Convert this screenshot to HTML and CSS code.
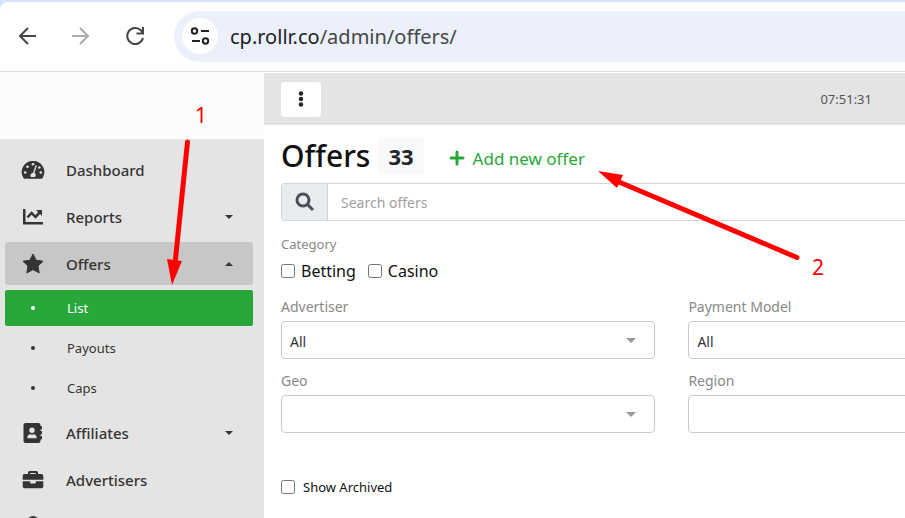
FILE: index.html
```
<!DOCTYPE html>
<html lang="en">
<head>
  <meta charset="UTF-8">
  <meta name="viewport" content="width=device-width, initial-scale=1.0">
  <title>Offers</title>
  <link rel="stylesheet" href="styles.css">
</head>
<body>
  <header class="browser">
    <button class="browser__btn" type="button" aria-label="Back">
      <svg width="20" height="20" viewBox="0 0 20 20"><path d="M19 10H3M11 2l-8 8 8 8" /></svg>
    </button>
    <button class="browser__btn disabled" type="button" aria-label="Forward">
      <svg width="20" height="20" viewBox="0 0 20 20"><path d="M1 10h16M9 2l8 8-8 8" /></svg>
    </button>
    <button class="browser__btn" type="button" aria-label="Reload">
      <svg width="20" height="20" viewBox="0 0 20 20"><path d="M18 12A8 8 0 1 1 16 4.500L18 7M18 1v6.500h-6.500" /></svg>
    </button>
    <div class="address">
      <button class="address__info" type="button" aria-label="Site information">
        <svg width="20" height="18" viewBox="0 0 20 18">
          <circle cx="4.500" cy="4" r="2.700" /><path d="M11 4h8" />
          <path d="M2 14h8" /><circle cx="15.500" cy="14" r="2.700" />
        </svg>
      </button>
      <span class="address__url">cp.rollr.co<span>/admin/offers/</span></span>
    </div>
  </header>

  <div class="app">
    <aside class="sidebar">
      <div class="sidebar__logo"></div>
      <nav class="nav">
        <a href="#" class="nav__item">
          <svg class="icon" width="24" height="20" viewBox="0 0 24 20">
            <path d="M12 1A11 11 0 0 0 2.600 18.200q.3.500 1 .5h16.800q.700 0 1-.5A11 11 0 0 0 12 1z" />
            <g class="cut"><circle cx="12" cy="4.200" r="1.300" /><circle cx="6.500" cy="6.800" r="1.300" /><circle cx="4.200" cy="12.500" r="1.300" /><circle cx="19.800" cy="12.500" r="1.300" /><circle cx="18.300" cy="7.500" r="1.300" /><path d="M14.600 5.200l1.300.400-2.400 7.500a2.800 2.800 0 0 1 .6 3.900H9.900a2.800 2.800 0 0 1 2.200-4.300z" /></g>
          </svg>
          Dashboard
        </a>
        <a href="#" class="nav__item">
          <svg class="icon" width="24" height="20" viewBox="0 0 24 20">
            <path d="M2 2h2.500v13H22v2.500H2z" /><path d="M15 3h6v6l-1.900-1.900-4.500 4.700-4-4-3.300 3.400-1.700-1.700 5-5.200 4 4L17 5z" />
          </svg>
          Reports
          <i class="caret"></i>
        </a>
        <a href="#" class="nav__item open">
          <svg class="icon" width="24" height="22" viewBox="0 0 24 22">
            <path d="M12 1l3.100 6.200 6.900 1-5 4.800 1.200 6.900-6.200-3.300-6.200 3.300L7 13 2 8.200l6.900-1z" stroke="#343434" stroke-linejoin="round" />
          </svg>
          Offers
          <i class="caret up"></i>
        </a>
        <div class="nav__sub">
          <a href="#" class="nav__link active">List</a>
          <a href="#" class="nav__link">Payouts</a>
          <a href="#" class="nav__link">Caps</a>
        </div>
        <a href="#" class="nav__item">
          <svg class="icon" width="24" height="22" viewBox="0 0 24 22">
            <path d="M4.500 1h13q2 0 2 2v1h.8q.7 0 .7.700v2q0 .7-.7.700h-.8v1.600h.8q.7 0 .7.700v2q0 .7-.7.700h-.8V14h.8q.7 0 .7.700v2q0 .7-.7.700h-.8V19q0 2-2 2h-13q-2 0-2-2V3q0-2 2-2z" />
            <g class="cut"><circle cx="11" cy="8.300" r="2.700" /><path d="M6.300 16.300c0-3 1.500-4 3-4 1 .5 2.400.5 3.400 0 1.500 0 3 1 3 4z" /></g>
          </svg>
          Affiliates
          <i class="caret"></i>
        </a>
        <a href="#" class="nav__item">
          <svg class="icon" width="24" height="20" viewBox="0 0 24 20">
            <path d="M7 4V2.500Q7 1 8.500 1h7Q17 1 17 2.500V4h3.500Q22.300 4 22.300 6v3.700H1.700V6Q1.700 4 3.500 4zM9.300 4h5.400V3H9.300zM1.700 11.200h7.500v1.600q0 .7.700.7h4.200q.7 0 .7-.7v-1.600h7.500V16.500q0 1.700-1.800 1.700h-17q-1.800 0-1.800-1.700z" fill-rule="evenodd" />
          </svg>
          Advertisers
        </a>
        <a href="#" class="nav__item" aria-label="Account">
          <svg class="icon" width="24" height="22" viewBox="0 0 24 22"><circle cx="12" cy="6" r="6" /><path d="M2 22q0-8 6-8h8q6 0 6 8z" /></svg>
        </a>
      </nav>
    </aside>

    <main class="main">
      <div class="topbar">
        <button class="topbar__menu" type="button" aria-label="Menu">
          <svg width="6" height="18" viewBox="0 0 6 18"><circle cx="3" cy="3.500" r="2.200" /><circle cx="3" cy="9" r="2.200" /><circle cx="3" cy="14.500" r="2.200" /></svg>
        </button>
        <time class="topbar__time">07:51:31</time>
      </div>

      <div class="content">
        <div class="title">
          <h1>Offers</h1>
          <span class="badge">33</span>
          <a href="#" class="title__add">
            <svg width="16" height="16" viewBox="0 0 16 16"><path d="M8 2v12M2 8h12" /></svg>
            Add new offer
          </a>
        </div>

        <div class="search">
          <label class="search__icon" for="search" aria-label="Search">
            <svg width="20" height="20" viewBox="0 0 20 20"><circle cx="8" cy="8" r="6" /><path d="M12.500 12.500l5.500 5.500" /></svg>
          </label>
          <input id="search" type="text" placeholder="Search offers">
        </div>

        <fieldset class="category">
          <legend>Category</legend>
          <label><input type="checkbox"> Betting</label>
          <label><input type="checkbox"> Casino</label>
        </fieldset>

        <div class="filters">
          <div class="field">
            <label for="advertiser">Advertiser</label>
            <select id="advertiser"><option>All</option></select>
          </div>
          <div class="field">
            <label for="payment">Payment Model</label>
            <select id="payment"><option>All</option></select>
          </div>
          <div class="field">
            <label for="geo">Geo</label>
            <select id="geo"><option></option></select>
          </div>
          <div class="field">
            <label for="region">Region</label>
            <select id="region"><option></option></select>
          </div>
        </div>

        <label class="archived"><input type="checkbox"> Show Archived</label>
      </div>
    </main>
  </div>

  <!-- step arrows -->
  <svg class="steps" width="840" height="300" viewBox="0 0 840 300">
    <path class="steps__line" d="M187.500 142L175 264M797 257.500L619 182" />
    <path d="M172 285L167 259L182 261zM598 171L623 175L617 188z" />
    <text x="195" y="123">1</text>
    <text x="812" y="275">2</text>
  </svg>
</body>
</html>
```
FILE: styles.css
```
/* reset */
* {
  margin: 0;
  padding: 0;
  box-sizing: border-box;
}
a {
  text-decoration: none;
}
button {
  border: 0;
  background: none;
}
body {
  position: relative;
  height: 100vh;
  overflow: hidden;
  display: flex;
  flex-direction: column;
  padding-top: 2px;
  background-color: #d3e3fd;
  color: #212529;
  font-family: "Noto Sans", "Open Sans", sans-serif;
  font-size: 16px;
}
input,
select,
button {
  font-family: inherit;
}

/* browser */
.browser {
  flex: none;
  display: flex;
  align-items: center;
  height: 71px;
  padding: 0 0 2px 17px;
  border-bottom: 1px solid #fff;
  border-radius: 8px 0 0 0;
  background-color: #fff;
  box-shadow: inset 0 -1px #dcdcdc;
  gap: 34px;
}
.browser__btn {
  width: 20px;
  height: 20px;
}
.browser__btn svg {
  display: block;
  fill: none;
  stroke: #474747;
  stroke-width: 2;
}
.browser__btn.disabled svg {
  stroke: #ababab;
}
.address {
  flex: 1;
  display: flex;
  align-items: center;
  gap: 12px;
  height: 51px;
  margin-left: -5px;
  padding-left: 8px;
  background-color: #ebf0fa;
  border-radius: 26px 0 0 26px;
}
.address__info {
  display: flex;
  align-items: center;
  justify-content: center;
  width: 36px;
  height: 36px;
  border-radius: 50%;
  background-color: #fff;
}
.address__info svg {
  fill: none;
  stroke: #202124;
  stroke-width: 2;
}
.address__url {
  font-size: 20px;
  color: #202124;
}
.address__url span {
  color: #474747;
}

/* app */
.app {
  flex: 1;
  display: flex;
  min-height: 0;
}
.sidebar {
  flex: none;
  width: 264px;
  overflow: hidden;
  background-color: #e4e4e4;
}
.sidebar__logo {
  height: 66px;
  background-color: #fcfcfc;
}

/* nav */
.nav {
  display: flex;
  flex-direction: column;
  gap: 4px;
  padding: 9px 11px 0 5px;
}
.nav__item {
  display: flex;
  align-items: center;
  gap: 21px;
  height: 43px;
  padding: 0 20px 0 16px;
  border-radius: 3px;
  color: #343434;
  font-size: 15px;
  font-weight: 500;
}
.nav__item.open {
  background-color: #c7c7c7;
}
.icon {
  fill: #343434;
}
.icon .cut {
  fill: #e4e4e4;
}
.caret {
  margin-left: auto;
  border: 4px solid transparent;
  border-top-color: #343434;
  border-bottom: 0;
}
.caret.up {
  border-top: 0;
  border-bottom: 4px solid #343434;
}
.nav__sub {
  display: flex;
  flex-direction: column;
  gap: 4px;
  padding: 1px 0;
}
.nav__link {
  display: flex;
  align-items: center;
  height: 36px;
  padding-left: 26px;
  border-radius: 2px;
  color: #343434;
  font-size: 13px;
}
.nav__link::before {
  content: "";
  width: 4px;
  height: 4px;
  margin-right: 32px;
  border-radius: 50%;
  background-color: currentColor;
}
.nav__link.active {
  background-color: #28a83a;
  color: #fff;
}

/* main */
.main {
  flex: 1;
  min-width: 0;
  overflow: hidden;
  background-color: #fff;
}
.topbar {
  display: flex;
  align-items: center;
  justify-content: space-between;
  height: 52px;
  padding: 0 33px 0 17px;
  background-color: #e4e4e4;
}
.topbar__menu {
  display: flex;
  align-items: center;
  justify-content: center;
  width: 40px;
  height: 35px;
  border-radius: 4px;
  background-color: #fff;
}
.topbar__menu svg {
  fill: #212529;
}
.topbar__time {
  font-size: 13px;
  color: #555;
}
.content {
  padding: 12px 0 0 17px;
}

/* title */
.title {
  display: flex;
  align-items: center;
  height: 38px;
}
.title h1 {
  font-size: 30px;
  font-weight: 500;
  line-height: 38px;
  color: #111;
}
.badge {
  margin-left: 8px;
  padding: 0 10px;
  border-radius: 4px;
  background-color: #f8f9fa;
  font-size: 22px;
  font-weight: 700;
  line-height: 36px;
}
.title__add {
  display: flex;
  align-items: center;
  gap: 8px;
  margin-left: 25px;
  padding-top: 4px;
  color: #28a83a;
  font-size: 17px;
}
.title__add svg {
  stroke: #28a83a;
  stroke-width: 3;
  stroke-linecap: round;
}

/* search */
.search {
  display: flex;
  height: 38px;
  margin-top: 8px;
  border: 1px solid #ced4da;
  border-right: 0;
  border-radius: 4px 0 0 4px;
}
.search__icon {
  display: flex;
  align-items: center;
  justify-content: center;
  width: 46px;
  border-right: 1px solid #ced4da;
  background-color: #e9ecef;
}
.search__icon svg {
  fill: none;
  stroke: #495057;
  stroke-width: 3;
}
.search input {
  flex: 1;
  padding: 0 13px;
  border: 0;
  background: none;
  font-size: 14px;
}
.search input::placeholder {
  color: #a0a0a0;
}

/* filters */
input[type="checkbox"] {
  width: 14px;
  height: 14px;
}
.category {
  display: flex;
  gap: 12px;
  margin-top: 14px;
  border: 0;
}
.category legend {
  color: #888;
  font-size: 13px;
  line-height: 18px;
}
.category label {
  display: flex;
  align-items: center;
  gap: 6px;
  height: 36px;
  color: #111;
  font-size: 16px;
}
.filters {
  display: grid;
  grid-template-columns: 60% 60%;
  gap: 12px 33px;
  margin-top: 8px;
}
.field label {
  display: block;
  color: #888;
  font-size: 14px;
  line-height: 20px;
}
.field select {
  display: block;
  width: 100%;
  height: 38px;
  margin-top: 4px;
  padding: 2px 8px 0;
  border: 1px solid #c9cbd3;
  border-radius: 4px;
  appearance: none;
  background: url("data:image/svg+xml,%3Csvg xmlns='http://www.w3.org/2000/svg' width='10' height='5'%3E%3Cpath d='M0 0h10L5 5z' fill='%23999'/%3E%3C/svg%3E") no-repeat right 18px center;
  color: #333;
  font-size: 14px;
}
.archived {
  display: inline-flex;
  align-items: center;
  gap: 8px;
  margin-top: 45px;
  color: #111;
  font-size: 13px;
}

/* steps */
.steps {
  position: absolute;
  top: 0;
  left: 0;
  fill: #f00;
  font-size: 21px;
  pointer-events: none;
}
.steps__line {
  fill: none;
  stroke: #f00;
  stroke-width: 5;
  stroke-linecap: round;
}
```
